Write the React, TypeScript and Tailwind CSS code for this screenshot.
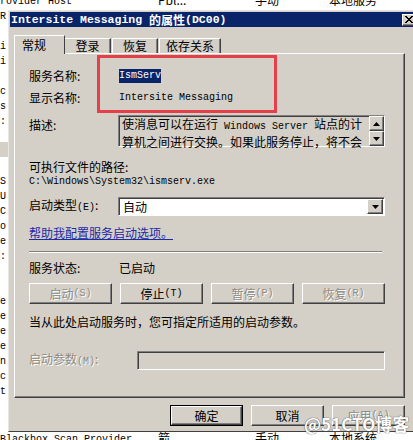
import React from 'react';

const cjk = "font-['Noto_Sans_CJK_SC','Liberation_Sans',sans-serif]";

function M({ children, className = '' }: { children: React.ReactNode; className?: string }) {
  return <span className={`font-['Liberation_Mono','Noto_Sans_CJK_SC',monospace] text-[10px] ${className}`}>{children}</span>;
}

function Btn({ children, disabled = false, className = '' }: { children: React.ReactNode; disabled?: boolean; className?: string }) {
  return (
    <div
      className={`flex items-center justify-center border border-t-white border-l-white border-r-[#404040] border-b-[#404040] bg-[#d4d0c8] shadow-[inset_-1px_-1px_0_#808080] ${
        disabled ? 'text-[#8e8a82] [text-shadow:1px_1px_0_#fff]' : 'text-black'
      } ${className}`}
    >
      {children}
    </div>
  );
}

const leftChars = ['R', '', 'i', 'i', '', 'c', 's', ':', '', '', '', 'S', 'U', 'C', 'o', 'e', ':', '', '', 'e', 'e', 'e', 'e', 'n', 'c', 't', '', ''];

function Row({ name, c2, c3, c4, gray = false }: { name: string; c2?: string; c3?: string; c4?: string; gray?: boolean }) {
  return (
    <div className={`flex h-[15px] shrink-0 items-center whitespace-nowrap text-[12px] leading-[15px] ${gray ? 'bg-[#d4d0c8]' : ''}`}>
      <div className="w-[158px]">
        <M>{name}</M>
      </div>
      <div className="w-[97px]">{c2}</div>
      <div className="w-[74px]">{c3}</div>
      <div>{c4}</div>
    </div>
  );
}

export default function App() {
  return (
    <div className={`relative h-[440px] w-[413px] overflow-hidden bg-white text-black ${cjk}`}>
      {/* services list behind the dialog */}
      <div className="flex flex-col">
        <div className="-mt-[8px]">
          <Row name="rovider Host" c2="Pbl..." c3="手动" c4="本地服务" />
        </div>
        {leftChars.map((c, i) => (
          <Row key={i} name={c} gray={i === 9} />
        ))}
        <div className="mt-[3px]">
          <Row name="Blackbox Scan Provider" c2="箭" c3="手动" c4="本地系统" />
        </div>
      </div>

      {/* properties dialog */}
      <div className="absolute left-[8px] top-[10px] flex h-[422px] w-[410px] flex-col border-l border-t border-b border-l-[#e8e6e0] border-t-[#e8e6e0] border-b-[#404040] bg-[#d4d0c8] pl-[1px] pt-[1px]">
        <div className="flex h-[15px] items-center bg-[#0a246a] pl-[1px] text-white">
          <span className="font-['Liberation_Mono',monospace] text-[11.5px] font-bold whitespace-pre">Intersite Messaging </span>
          <span className="text-[12px] font-bold leading-[15px]">的属性</span>
          <span className="font-['Liberation_Mono',monospace] text-[11.5px] font-bold">(DC00)</span>
          <div className="ml-auto mr-[2px] flex h-[12px] w-[14px] items-center justify-center border border-t-white border-l-white border-r-[#404040] border-b-[#404040] bg-[#d4d0c8] shadow-[inset_-1px_-1px_0_#808080]">
            <svg width="8" height="7" viewBox="0 0 8 7">
              <path d="M0 0L7 7M1 0L8 7M7 0L0 7M8 0L1 7" stroke="#000" strokeWidth="1" />
            </svg>
          </div>
        </div>

        <div className="flex flex-col px-[4px] pt-[8px]">
          {/* tabs */}
          <div className="flex h-[18px] items-end text-[12px]">
            <div className="relative z-10 -mb-[1px] flex h-[19px] w-[51px] items-start border-l border-t border-r border-l-white border-t-white border-r-[#404040] bg-[#d4d0c8] pl-[7px] pt-[1px] leading-[15px]">
              常规
            </div>
            <div className="flex h-[15px] w-[46px] items-center justify-center border-t border-r border-t-white border-r-[#404040] leading-[14px] shadow-[inset_-1px_0_0_#808080]">
              登录
            </div>
            <div className="ml-[1px] flex h-[15px] w-[46px] items-center justify-center border-l border-t border-r border-l-white border-t-white border-r-[#404040] leading-[14px] shadow-[inset_-1px_0_0_#808080]">
              恢复
            </div>
            <div className="ml-[1px] flex h-[15px] w-[62px] items-center justify-center border-l border-t border-r border-l-white border-t-white border-r-[#404040] leading-[14px] shadow-[inset_-1px_0_0_#808080]">
              依存关系
            </div>
          </div>

          {/* tab panel */}
          <div className="relative flex h-[345px] w-[391px] flex-col border border-t-white border-l-white border-r-[#404040] border-b-[#404040] pl-[14px] pt-[14px] text-[12px] leading-[16px] shadow-[inset_-1px_-1px_0_#808080]">
            <div className="flex h-[16px] items-center">
              <div className="w-[89px]">服务名称:</div>
              <M className="ml-[1px] bg-[#0a246a] leading-[14px] text-white">IsmServ</M>
            </div>
            <div className="mt-[6px] flex h-[16px] items-center">
              <div className="w-[89px]">显示名称:</div>
              <M className="ml-[1px]">Intersite Messaging</M>
            </div>

            <div className="mt-[9px] flex items-start">
              <div className="w-[89px] pt-[2px]">描述:</div>
              <div className="flex h-[32px] w-[267px] border border-t-[#808080] border-l-[#808080] border-r-white border-b-white shadow-[inset_1px_1px_0_#404040]">
                <div className="flex-1 pl-[3px] leading-[15px] whitespace-nowrap">
                  <div>
                    使消息可以在运行<M className="whitespace-pre"> Windows Server </M>站点的计
                  </div>
                  <div>算机之间进行交换。如果此服务停止，将不会</div>
                </div>
                <div className="flex w-[15px] flex-col">
                  <Btn className="h-[15px] w-[15px]">
                    <svg width="7" height="4" viewBox="0 0 7 4">
                      <path d="M3.5 0L7 4H0Z" fill="#000" />
                    </svg>
                  </Btn>
                  <Btn className="h-[15px] w-[15px]">
                    <svg width="7" height="4" viewBox="0 0 7 4">
                      <path d="M0 0H7L3.5 4Z" fill="#000" />
                    </svg>
                  </Btn>
                </div>
              </div>
            </div>

            <div className="mt-[12px] h-[16px]">可执行文件的路径:</div>
            <div className="flex h-[14px] items-center">
              <M>{'C:\\Windows\\System32\\ismserv.exe'}</M>
            </div>

            <div className="mt-[8px] flex items-center">
              <div className="w-[89px]">
                启动类型<M>(E)</M>:
              </div>
              <div className="flex h-[19px] w-[267px] items-center border border-t-[#808080] border-l-[#808080] border-r-white border-b-white bg-white pr-[1px] shadow-[inset_1px_1px_0_#404040]">
                <div className="flex-1 pl-[4px]">自动</div>
                <Btn className="h-[15px] w-[16px]">
                  <svg width="7" height="4" viewBox="0 0 7 4">
                    <path d="M0 0H7L3.5 4Z" fill="#000" />
                  </svg>
                </Btn>
              </div>
            </div>

            <div className="mt-[9px] h-[16px]">
              <span className="text-[#1a2aa8] underline">帮助我配置服务启动选项。</span>
            </div>

            <div className="mt-[10px] h-[2px] w-[353px] border-t border-b border-t-[#808080] border-b-white" />

            <div className="mt-[7px] flex h-[16px] items-center">
              <div className="w-[90px]">服务状态:</div>
              <div>已启动</div>
            </div>

            <div className="mt-[7px] grid h-[21px] w-[356px] grid-cols-4 gap-[8px]">
              <Btn disabled>
                启动<M>(S)</M>
              </Btn>
              <Btn>
                停止<M>(T)</M>
              </Btn>
              <Btn disabled>
                暂停<M>(P)</M>
              </Btn>
              <Btn disabled>
                恢复<M>(R)</M>
              </Btn>
            </div>

            <div className="mt-[10px] h-[16px]">当从此处启动服务时，您可指定所适用的启动参数。</div>

            <div className="mt-[21px] flex items-center">
              <div className="w-[108px] text-[#8e8a82] [text-shadow:1px_1px_0_#fff]">
                启动参数<M>(M)</M>:
              </div>
              <div className="h-[19px] w-[248px] border border-t-[#808080] border-l-[#808080] border-r-white border-b-white shadow-[inset_1px_1px_0_#404040]" />
            </div>

            {/* red annotation box */}
            <div className="absolute left-[82px] top-[1px] h-[58px] w-[180px] border-[3px] border-[#e5404a]" />
          </div>

          {/* dialog buttons */}
          <div className="mt-[7px] flex w-[391px] justify-end gap-[8px] text-[12px]">
            <div className="border border-black">
              <Btn className="h-[19px] w-[71px]">确定</Btn>
            </div>
            <Btn className="h-[21px] w-[73px]">取消</Btn>
            <Btn disabled className="h-[21px] w-[73px]">
              应用<M>(A)</M>
            </Btn>
          </div>
        </div>
      </div>

      {/* watermark */}
      <div className="absolute left-[304px] top-[411px] text-[17px] font-bold text-white [text-shadow:0_0_1px_#555,0_0_1px_#555]">
        @51CTO博客
      </div>
    </div>
  );
}
